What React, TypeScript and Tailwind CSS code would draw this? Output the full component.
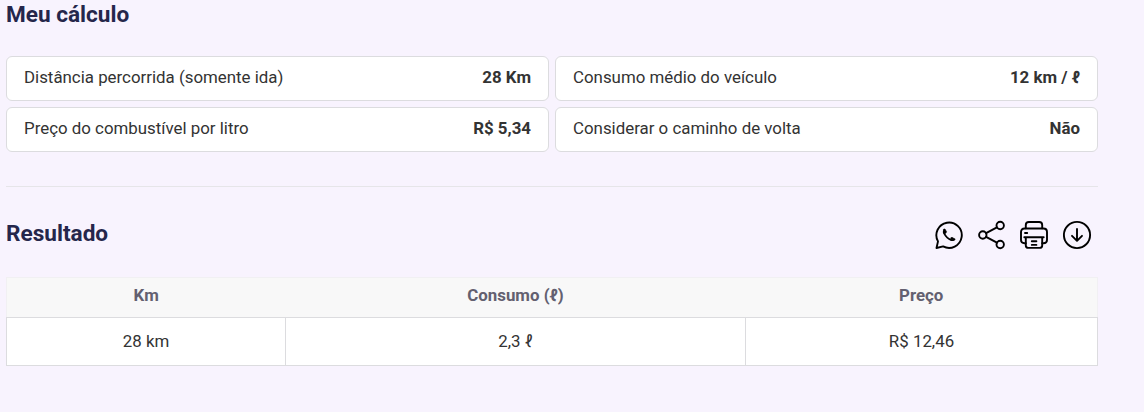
import type { ReactNode } from "react";

const details = [
  { label: "Distância percorrida (somente ida)", value: "28 Km" },
  { label: "Consumo médio do veículo", value: "12 km / ℓ" },
  { label: "Preço do combustível por litro", value: "R$ 5,34" },
  { label: "Considerar o caminho de volta", value: "Não" },
];

function Icon({ label, children }: { label: string; children: ReactNode }) {
  return (
    <button aria-label={label} className="block size-[30px]">
      <svg
        viewBox="0 0 30 30"
        width="30"
        height="30"
        fill="none"
        stroke="#000"
        strokeWidth="1.9"
        strokeLinecap="round"
        strokeLinejoin="round"
      >
        {children}
      </svg>
    </button>
  );
}

function Actions() {
  return (
    <div className="flex gap-[13px]">
      <Icon label="WhatsApp">
        <path d="M4 21.4A12.7 12.7 0 1 1 9.1 26.4L2.5 28Z" />
        <path
          d="M10.3 9.6C9.5 10.8 9.7 12.4 10.3 13.7C11.9 17 14.1 19.1 17.3 20.1C18.8 20.5 19.8 20.2 20.6 19.3"
          strokeWidth="1.7"
        />
        <path
          d="M9.8 9.3L11 9.1L12.6 11.8L11.8 13.3L10 13.6ZM16.8 19.8L16.8 17.8L18 17.3L20.5 18.8L20.3 19.9Z"
          fill="#000"
          strokeWidth="0.6"
        />
      </Icon>
      <Icon label="Compartilhar">
        <circle cx="5.8" cy="15" r="3.7" />
        <circle cx="23.2" cy="5.5" r="3.7" />
        <circle cx="23.2" cy="24.5" r="3.7" />
        <path d="M9.1 13.2 19.9 7.3M9.1 16.8 19.9 22.7" />
      </Icon>
      <Icon label="Imprimir">
        <path d="M5.8 8.3V5Q5.8 2 8.8 2H19.2Q22.2 2 22.2 5V8.3" />
        <path d="M5.8 23.2H4.5Q1 23.2 1 20V12Q1 8.5 4.6 8.5H23.4Q27 8.5 27 12V20Q27 23.2 23.5 23.2H22.2" />
        <path d="M4.3 17.3H23.7M5.8 17.3V25.5Q5.8 27.9 8.3 27.9H19.7Q22.2 27.9 22.2 25.5V17.3M5 13H7.2M11.8 21.3H16.4M11.8 24.9H16.4" />
      </Icon>
      <Icon label="Baixar">
        <circle cx="14" cy="15" r="13.1" />
        <path d="M14 9V20.6M9 15.8 14 20.8 19 15.8" />
      </Icon>
    </div>
  );
}

export default function App() {
  return (
    <main className="h-[412px] overflow-hidden bg-[#f8f3fe] pl-1.5 font-['Roboto',sans-serif] text-[#333]">
      <div className="w-[1092px]">
        <h2 className="h-14 text-[22.6px] leading-[29px] font-bold text-[#25264b]">Meu cálculo</h2>
        <dl className="grid grid-cols-2 gap-1.5">
          {details.map((item) => (
            <div
              key={item.label}
              className="flex h-[45px] justify-between rounded-md border border-[#dcdcdf] bg-white px-[17px] text-[16.88px] leading-[41px]"
            >
              <dt>{item.label}</dt>
              <dd className="font-bold">{item.value}</dd>
            </div>
          ))}
        </dl>
        <hr className="mt-[34px] border-[#e6e5e9]" />
        <div className="flex h-[90px] justify-between pt-[33px] pr-[5px]">
          <h2 className="text-[22.6px] leading-[28px] font-bold text-[#25264b]">Resultado</h2>
          <Actions />
        </div>
        <table className="w-full table-fixed border-collapse text-center text-[16.88px] leading-6">
          <colgroup>
            <col className="w-[279px]" />
            <col className="w-[460px]" />
            <col />
          </colgroup>
          <thead>
            <tr className="h-10 border border-[#f1f0f3] bg-[#f8f8f8] text-[#636070]">
              <th className="pb-1.5 font-bold">Km</th>
              <th className="pb-1.5 font-bold">Consumo (ℓ)</th>
              <th className="pb-1.5 font-bold">Preço</th>
            </tr>
          </thead>
          <tbody>
            <tr className="h-12 bg-white">
              <td className="border border-[#dcdcdf] pb-0.5">28 km</td>
              <td className="border border-[#dcdcdf] pb-0.5">2,3 ℓ</td>
              <td className="border border-[#dcdcdf] pb-0.5">R$ 12,46</td>
            </tr>
          </tbody>
        </table>
      </div>
    </main>
  );
}
